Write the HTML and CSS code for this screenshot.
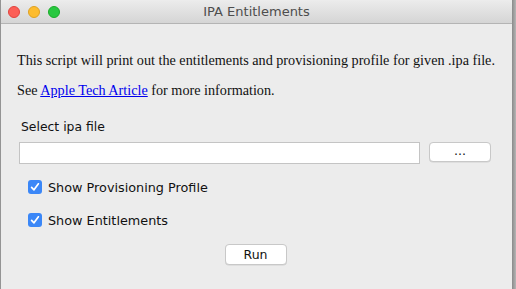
FILE: index.html
```html
<!DOCTYPE html>
<html>
<head>
<meta charset="utf-8">
<link rel="stylesheet" href="styles.css">
</head>
<body>
<div class="window">
  <div class="titlebar">
    <div class="lights">
      <span class="light red"></span>
      <span class="light yellow"></span>
      <span class="light green"></span>
    </div>
    <div class="title">IPA Entitlements</div>
  </div>
  <div class="content">
    <p class="desc">This script will print out the entitlements and provisioning profile for given .ipa file.</p>
    <p class="desc second">See <a href="#">Apple Tech Article</a> for more information.</p>
    <div class="label">Select ipa file</div>
    <div class="filerow">
      <div class="field"></div>
      <div class="btn browse">...</div>
    </div>
    <div class="check first">
      <span class="box"><svg width="14" height="14" viewBox="0 0 14 14"><path d="M3.6 7.3 L6 9.8 L10.4 3.8" fill="none" stroke="#fff" stroke-width="1.7" stroke-linecap="round" stroke-linejoin="round"/></svg></span>
      <span class="ctext">Show Provisioning Profile</span>
    </div>
    <div class="check">
      <span class="box"><svg width="14" height="14" viewBox="0 0 14 14"><path d="M3.6 7.3 L6 9.8 L10.4 3.8" fill="none" stroke="#fff" stroke-width="1.7" stroke-linecap="round" stroke-linejoin="round"/></svg></span>
      <span class="ctext">Show Entitlements</span>
    </div>
    <div class="runrow">
      <div class="btn run">Run</div>
    </div>
  </div>
</div>
</body>
</html>
```
FILE: styles.css
```css
html, body {
  margin: 0;
  padding: 0;
}
body {
  width: 516px;
  height: 289px;
  overflow: hidden;
  background: linear-gradient(to right, #8e8e8e 0, #9a9a9a 1px, #ececec 1px, #ececec 512px, #8a8a8a 512px, #b5b5b5 516px);
}
.window {
  margin: 1px 4px 0 1px;
  height: 288px;
  background: #ececec;
  border-radius: 5px 5px 0 0;
  overflow: hidden;
  font-family: "DejaVu Sans", "Liberation Sans", sans-serif;
}
.titlebar {
  height: 22px;
  background: linear-gradient(#ebebeb, #d5d5d5);
  border-bottom: 1px solid #b4b4b4;
  display: flex;
  align-items: center;
  position: relative;
}
.lights {
  display: flex;
  gap: 8px;
  padding-left: 7px;
}
.light {
  width: 12px;
  height: 12px;
  border-radius: 50%;
  box-sizing: border-box;
}
.red { background: #fc5f57; border: 0.5px solid #e0443e; }
.yellow { background: #fdbc2e; border: 0.5px solid #dea123; }
.green { background: #28c840; border: 0.5px solid #1aab29; }
.title {
  position: absolute;
  left: 0;
  right: 0;
  text-align: center;
  font-size: 13px;
  color: #4d4d4d;
  top: 3px;
}
.content {
  padding: 0 0 0 16px;
}
.desc {
  margin: 0;
  font-family: "Liberation Serif", serif;
  font-size: 14.2px;
  color: #111;
  padding-top: 28px;
  line-height: 16px;
}
.desc.second {
  padding-top: 14px;
}
.desc a {
  color: #0000ee;
}
.label {
  margin-top: 22px;
  margin-left: 4px;
  font-size: 12.4px;
  color: #111;
  line-height: 14px;
}
.filerow {
  display: flex;
  align-items: flex-start;
  margin-top: 8px;
  margin-left: 2px;
}
.field {
  width: 399px;
  height: 20px;
  background: #fff;
  border: 1px solid #c4c4c4;
}
.btn {
  background: #fff;
  border: 1px solid #c8c8c8;
  border-radius: 4px;
  box-sizing: border-box;
  font-size: 12.5px;
  color: #111;
  text-align: center;
  box-shadow: 0 0.5px 0.5px rgba(0,0,0,0.12);
}
.browse {
  margin-left: 9px;
  width: 62px;
  height: 20px;
  line-height: 16px;
}
.check {
  display: flex;
  align-items: center;
  margin-left: 11px;
  margin-top: 19px;
  height: 14px;
}
.check.first {
  margin-top: 16px;
}
.box {
  width: 14px;
  height: 14px;
  border-radius: 3px;
  background: #3b87f7;
  display: flex;
}
.ctext {
  margin-left: 6px;
  font-size: 12.8px;
  color: #111;
}
.runrow {
  display: flex;
  justify-content: center;
  margin-top: 17px;
  padding-right: 14px;
}
.run {
  width: 62px;
  height: 21px;
  line-height: 19px;
  margin-left: -4px;
}
```
